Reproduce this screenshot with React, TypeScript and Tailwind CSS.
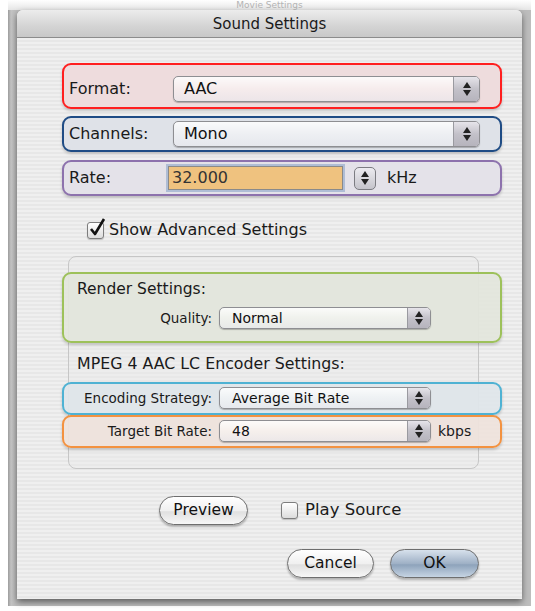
import React from "react";

const FONT = "font-['DejaVu_Sans',_'Liberation_Sans',_sans-serif]";

function Stepper({ className = "" }: { className?: string }) {
  return (
    <span className={`flex flex-col items-center justify-center gap-[2px] ${className}`}>
      <svg width="8" height="6" viewBox="0 0 8 6">
        <path d="M4 0 L8 6 L0 6 Z" fill="#222" />
      </svg>
      <svg width="8" height="6" viewBox="0 0 8 6">
        <path d="M0 0 L8 0 L4 6 Z" fill="#222" />
      </svg>
    </span>
  );
}

function Popup({
  value,
  width,
  small = false,
}: {
  value: string;
  width: string;
  small?: boolean;
}) {
  return (
    <div
      className={`${width} ${small ? "h-[22px] text-[14px]" : "h-[26px] text-[16px]"} flex items-stretch rounded-[5px] border border-[#8e8e92] bg-[linear-gradient(180deg,rgba(255,255,255,0.85),rgba(255,255,255,0.45)_50%,rgba(235,235,240,0.6))] shadow-[0_1px_1px_rgba(0,0,0,0.25)] overflow-hidden`}
    >
      <span className={`flex-1 flex items-center ${small ? "pl-[12px]" : "pl-[10px]"} text-[#111]`}>{value}</span>
      <Stepper
        className={`${small ? "w-[23px]" : "w-[26px]"} border-l border-[#9a9aa0] bg-[linear-gradient(180deg,#e6e4ea,#c3c1c9_50%,#b6b4bd)]`}
      />
    </div>
  );
}

function Highlight({
  tone,
  className = "",
  children,
}: {
  tone: string;
  className?: string;
  children: React.ReactNode;
}) {
  return (
    <div className={`rounded-[9px] border-2 shadow-[0_2px_3px_rgba(0,0,0,0.18)] ${tone} ${className}`}>
      {children}
    </div>
  );
}

function AquaButton({ label, width, primary = false }: { label: string; width: string; primary?: boolean }) {
  return (
    <button
      type="button"
      className={`${width} h-[29px] rounded-full border border-[#6e6e6e] text-[15.5px] text-[#111] shadow-[0_2px_2px_rgba(0,0,0,0.25)] ${
        primary
          ? "bg-[linear-gradient(180deg,#d7e1ec,#9fb1c6_50%,#8ea3bb_55%,#c6d4e3)]"
          : "bg-[linear-gradient(180deg,#ffffff,#f0f0f0_50%,#e0e0e0_55%,#f7f7f7)]"
      }`}
    >
      {label}
    </button>
  );
}

function Checkbox({ checked }: { checked: boolean }) {
  return (
    <span className="w-[17px] h-[17px] relative rounded-[3px] border border-[#7d7d7d] bg-[linear-gradient(180deg,#ffffff,#dcdcdc)] shadow-[0_1px_1px_rgba(0,0,0,0.2)] flex items-center justify-center">
      {checked && (
        <svg width="17" height="19" viewBox="0 0 17 19" className="absolute -top-[5px] left-[1px]">
          <path d="M2 11 L6 16 L15 1" stroke="#111" strokeWidth="2.6" fill="none" strokeLinejoin="round" />
        </svg>
      )}
    </span>
  );
}

export default function App() {
  return (
    <div className={`w-[535px] h-[611px] bg-white overflow-hidden ${FONT}`}>
      {/* background window */}
      <div className="ml-[8px] w-[523px] h-[606px] bg-[linear-gradient(90deg,#9c9c9c,#c4c4c4_3px,#bdbdbd_8px)] flex flex-col">
        <div className="h-[10px] bg-[linear-gradient(180deg,#ffffff,#e6e6e6)] flex justify-center text-[9px] leading-[10px] text-[#b4b4b4]">
          Movie Settings
        </div>
        <div className="flex-1 flex">
          {/* dialog */}
          <div className="ml-[9px] w-[505px] h-[589px] flex flex-col rounded-t-[6px] shadow-[0_3px_6px_rgba(0,0,0,0.5)] bg-[repeating-linear-gradient(180deg,#efefef_0px,#efefef_2px,#e7e7e7_2px,#e7e7e7_4px)]">
            <div className="h-[28px] rounded-t-[6px] border-b border-[#8c8c8c] bg-[linear-gradient(180deg,#ececec,#d4d4d4_60%,#c8c8c8)] flex items-center justify-center pt-[2px] text-[15px] text-[#1a1a1a]">
              Sound Settings
            </div>

            <div className="pl-[45px] pr-[20px] pt-[25px] flex flex-col">
              <Highlight tone="border-[#ff1f1f] bg-[#eedcdd]" className="h-[46px] flex items-center pl-[5px] pt-[6px]">
                <span className="w-[104px] text-[16px] text-[#1a1a1a]">Format:</span>
                <Popup value="AAC" width="w-[307px]" />
              </Highlight>
              <Highlight tone="border-[#1f4c85] bg-[#dfe2e8] mt-[7px]" className="h-[36px] flex items-center pl-[5px]">
                <span className="w-[104px] text-[16px] text-[#1a1a1a]">Channels:</span>
                <Popup value="Mono" width="w-[307px]" />
              </Highlight>
              <Highlight tone="border-[#8d72ad] bg-[#e4e2e9] mt-[8px]" className="h-[36px] flex items-center pl-[5px]">
                <span className="w-[99px] text-[16px] text-[#1a1a1a]">Rate:</span>
                <div className="w-[175px] h-[24px] border border-[#8a8a8a] shadow-[0_0_0_2px_rgba(140,165,200,0.6)] bg-[#efc27f] flex items-center pl-[3px] text-[16px] text-[#333]">
                  32.000
                </div>
                <Stepper className="ml-[11px] w-[22px] h-[23px] rounded-[5px] border border-[#7c7c82] bg-[linear-gradient(180deg,#ecebf0,#c5c4cb)]" />
                <span className="ml-[11px] text-[16px] text-[#1a1a1a]">kHz</span>
              </Highlight>
            </div>

            <div className="mt-[22px] ml-[70px] flex items-center gap-[5px] text-[16px] text-[#1a1a1a]">
              <Checkbox checked />
              <span>Show Advanced Settings</span>
            </div>

            {/* group box */}
            <div className="mt-[14px] ml-[51px] w-[411px] h-[213px] rounded-[8px] border border-[#c6c6c6] bg-[#ebebeb]/40 pt-[15px] flex flex-col">
              <Highlight tone="border-[#9dc15a] bg-[#e3e6dc]/95" className="-ml-[7px] w-[440px] h-[71px] flex flex-col pl-[13px]">
                <span className="mt-[4px] text-[15.5px] text-[#1a1a1a]">Render Settings:</span>
                <div className="mt-[6px] flex items-center">
                  <span className="w-[142px] pr-[7px] text-right text-[13.5px] text-[#1a1a1a]">Quality:</span>
                  <Popup value="Normal" width="w-[212px]" small />
                </div>
              </Highlight>
              <span className="mt-[9px] ml-[8px] text-[15.8px] text-[#1a1a1a]">MPEG 4 AAC LC Encoder Settings:</span>
              <Highlight tone="border-[#4fb2d3] bg-[#dfe6ea]/95" className="mt-[6px] -ml-[7px] w-[440px] h-[33px] flex items-center pl-[13px]">
                <span className="w-[142px] pr-[7px] text-right text-[13.5px] text-[#1a1a1a]">Encoding Strategy:</span>
                <Popup value="Average Bit Rate" width="w-[212px]" small />
              </Highlight>
              <Highlight tone="border-[#f39240] bg-[#eee3dc]/95" className="-ml-[7px] w-[440px] h-[33px] flex items-center pl-[13px]">
                <span className="w-[142px] pr-[7px] text-right text-[13.5px] text-[#1a1a1a]">Target Bit Rate:</span>
                <Popup value="48" width="w-[212px]" small />
                <span className="ml-[7px] text-[14px] text-[#1a1a1a]">kbps</span>
              </Highlight>
            </div>

            <div className="mt-[27px] ml-[142px] flex items-center">
              <AquaButton label="Preview" width="w-[89px]" />
              <div className="ml-[33px] flex items-center gap-[7px] text-[16.5px] text-[#1a1a1a]">
                <Checkbox checked={false} />
                <span>Play Source</span>
              </div>
            </div>

            <div className="mt-[24px] ml-[270px] flex items-center gap-[16px]">
              <AquaButton label="Cancel" width="w-[87px]" />
              <AquaButton label="OK" width="w-[89px]" primary />
            </div>
          </div>
        </div>
      </div>
    </div>
  );
}
